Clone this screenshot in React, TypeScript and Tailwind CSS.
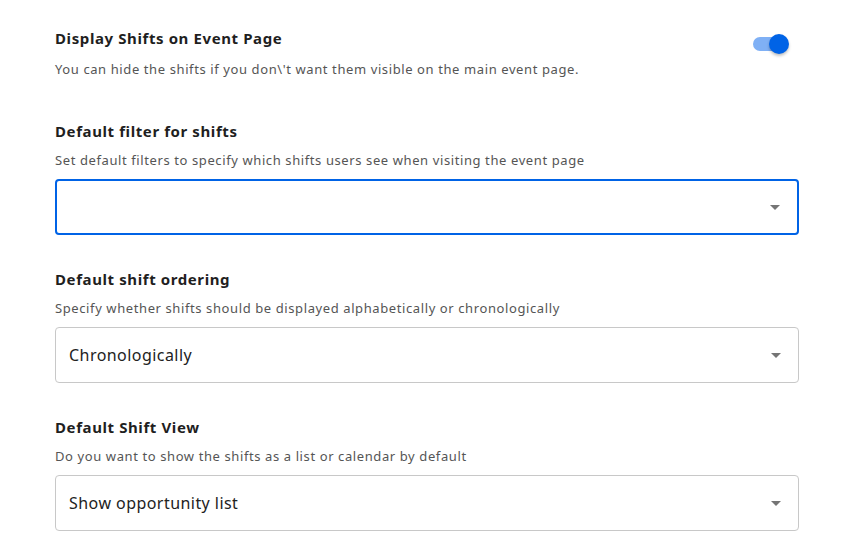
import React from "react";

const font = { fontFamily: "'Noto Sans', Lato, Arial, sans-serif" };

function Arrow() {
  return (
    <svg width="24" height="24" viewBox="0 0 24 24" className="text-[#757575]">
      <path d="M7 10l5 5 5-5z" fill="currentColor" />
    </svg>
  );
}

function SelectBox({ value, focused = false }: { value?: string; focused?: boolean }) {
  return (
    <div
      className={`flex items-center justify-between h-[56px] rounded-[4px] bg-white pl-[13px] pr-[10px] ${
        focused ? "border-2 border-[#0063e6] pl-[12px] pr-[9px]" : "border border-[#c8c8c8]"
      }`}
    >
      <span className="text-[16px] tracking-[0.45px] text-[#222]">{value}</span>
      <Arrow />
    </div>
  );
}

function Section({
  title,
  desc,
  children,
}: {
  title: string;
  desc: string;
  children?: React.ReactNode;
}) {
  return (
    <div className="flex flex-col">
      <h3 className="text-[15px] leading-[20px] font-bold tracking-[0.6px] text-[#1f1f1f]">{title}</h3>
      <p className="mt-[9px] text-[13px] leading-[20px] tracking-[0.6px] text-[#555]">{desc}</p>
      <div className="mt-[9px]">{children}</div>
    </div>
  );
}

export default function App() {
  return (
    <div className="w-[864px] h-[560px] bg-white pl-[55px] pr-[65px] pt-[28px]" style={font}>
      {/* ── Display toggle ── */}
      <div className="flex items-start justify-between">
        <div>
          <h3 className="text-[15px] leading-[20px] font-bold tracking-[0.6px] text-[#1f1f1f]">
            Display Shifts on Event Page
          </h3>
          <p className="mt-[11px] text-[13px] leading-[20px] tracking-[0.6px] text-[#555]">
            You can hide the shifts if you don\'t want them visible on the main event page.
          </p>
        </div>
        <div className="relative mt-[6px] mr-[10px] w-[36px] h-[20px] flex items-center">
          <div className="w-[34px] h-[14px] rounded-full bg-[#7fb0f5]" />
          <div className="absolute right-0 top-0 w-[20px] h-[20px] rounded-full bg-[#0063e6] shadow-[0_2px_3px_rgba(0,0,0,0.25)]" />
        </div>
      </div>

      <div className="mt-[42px] flex flex-col gap-[34px]">
        <Section
          title="Default filter for shifts"
          desc="Set default filters to specify which shifts users see when visiting the event page"
        >
          <SelectBox focused />
        </Section>
        <Section
          title="Default shift ordering"
          desc="Specify whether shifts should be displayed alphabetically or chronologically"
        >
          <SelectBox value="Chronologically" />
        </Section>
        <Section
          title="Default Shift View"
          desc="Do you want to show the shifts as a list or calendar by default"
        >
          <SelectBox value="Show opportunity list" />
        </Section>
      </div>
    </div>
  );
}
